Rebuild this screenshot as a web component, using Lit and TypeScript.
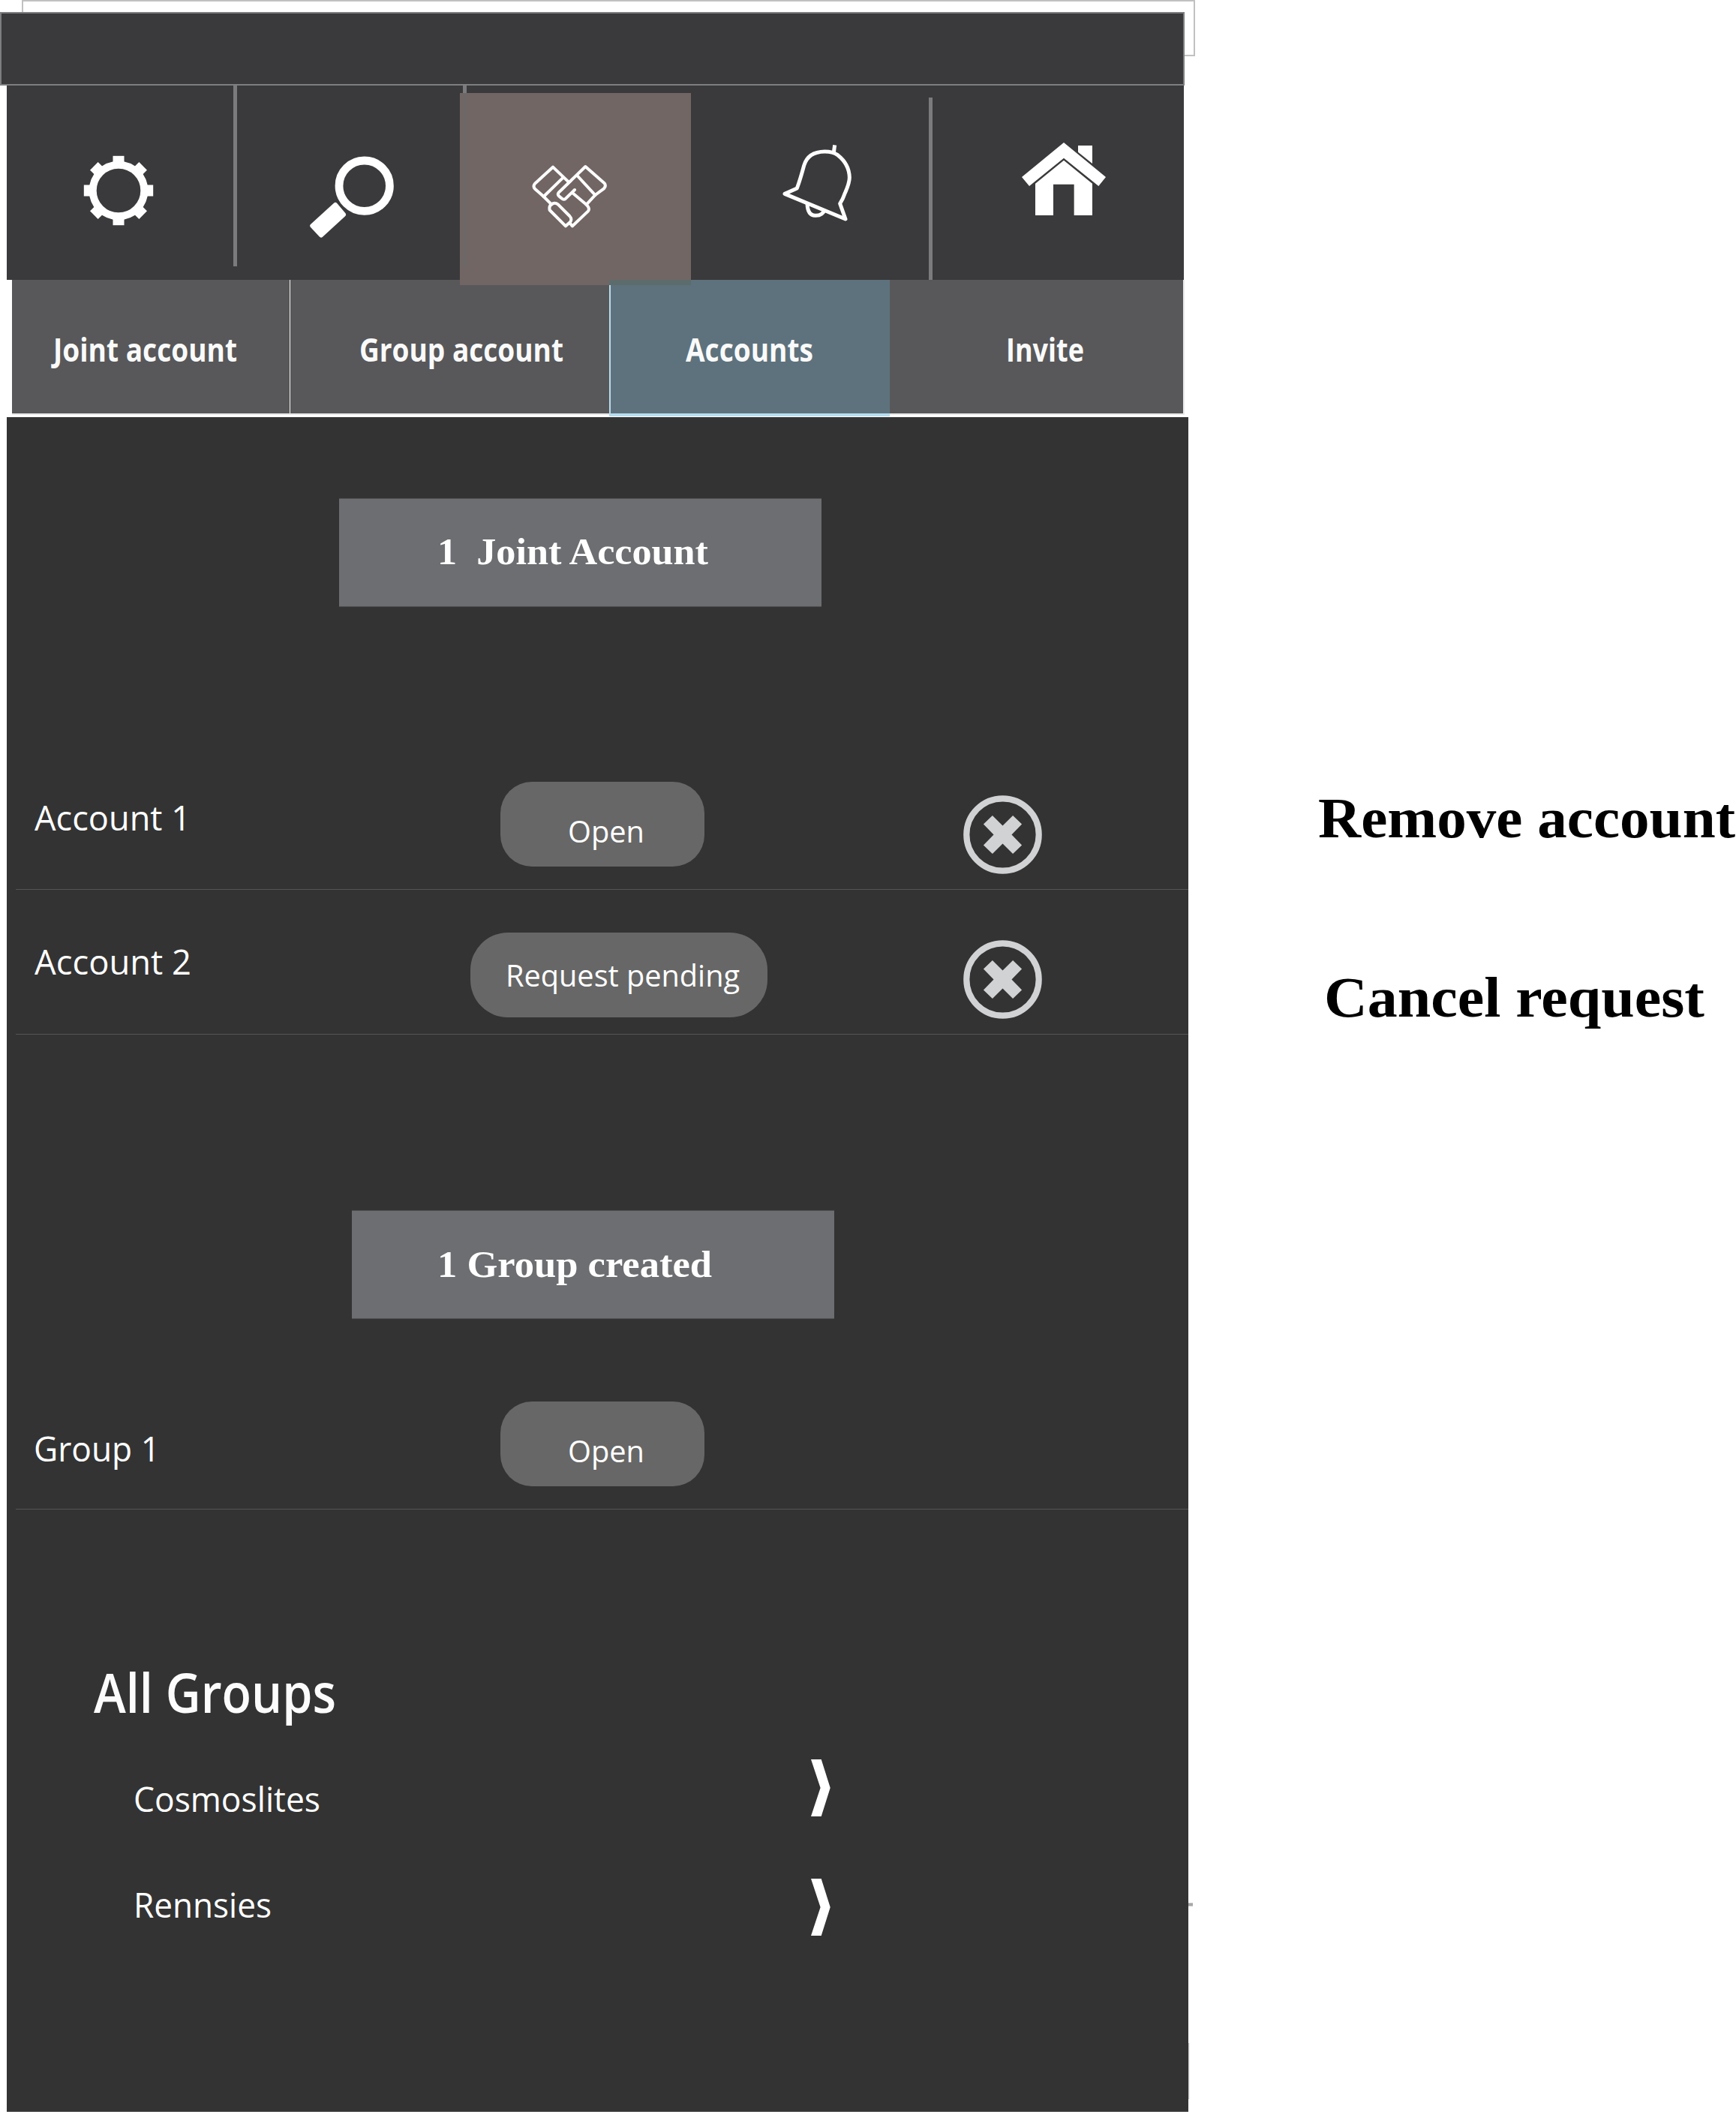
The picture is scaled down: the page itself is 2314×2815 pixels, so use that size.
import { LitElement, html, css, svg } from "lit";
import { customElement, property, state } from "lit/decorators.js";
import { classMap } from "lit/directives/class-map.js";

/** A single line of text condensed or widened to an exact advance width. */
@customElement("fit-text")
class FitText extends LitElement {
  @property() text = "";
  @property({ type: Number }) width = 100;
  @state() private scale = 1;

  static styles = css`
    :host {
      display: block;
      flex: none;
      line-height: 1;
      white-space: pre;
    }
    .box {
      display: block;
      height: 1em;
    }
    .line {
      display: inline-block;
      transform-origin: 0 0;
    }
  `;

  firstUpdated() {
    const line = this.renderRoot.querySelector(".line") as HTMLElement;
    const natural = line.getBoundingClientRect().width;
    if (natural > 0) this.scale = this.width / natural;
  }

  render() {
    return html`<span class="box" style="width:${this.width}px"
      ><span class="line" style="transform:scaleX(${this.scale})">${this.text}</span></span
    >`;
  }
}

const tooth = "M-7.5 -46.2h15v10h-15z";
const gearIcon = svg`<svg class="icon gear" viewBox="-47 -47 94 94" width="94" height="94">
  <circle r="34.3" fill="none" stroke="#fff" stroke-width="10"/>
  ${[0, 45, 90, 135, 180, 225, 270, 315].map(
    (a) => svg`<path d=${tooth} fill="#fff" transform="rotate(${a})"/>`
  )}
</svg>`;

const searchIcon = svg`<svg class="icon search" viewBox="412 207 114 112" width="114" height="112">
  <circle cx="485.7" cy="247.7" r="33.7" fill="none" stroke="#fff" stroke-width="10.8"/>
  <path d="M447 273L458 286L428 313.5L416.3 301Z" fill="#fff" stroke="#fff" stroke-width="6" stroke-linejoin="round"/>
</svg>`;

const handshakeIcon = svg`<svg class="icon shake" viewBox="324 324 306 261" width="102" height="87">
  <g fill="none" stroke="#fff" stroke-width="12" stroke-linejoin="round" stroke-linecap="round">
    <path d="M474 398L411 338L339 404Q330 415 339 425L374 456L406 488"/>
    <path d="M452 380L374 456"/>
    <path d="M545 488L580 450L615 424Q625 413 617 403L541 336L434 440Q428 448 436 455L446 463Q454 471 462 464L498 429"/>
    <path d="M508 372L580 450"/>
    <path d="M488 440L545 488Q560 504 552 514L489 574L478 561"/>
    <path d="M398 510Q394 490 410 484Q421 479 432 488L478 534Q489 546 480 558L462 574Z"/>
  </g>
</svg>`;

const bellIcon = svg`<svg class="icon bell" viewBox="66 66 285 315" width="95" height="105">
  <g fill="none" stroke="#fff" stroke-width="15" stroke-linejoin="round" stroke-linecap="butt">
    <path d="M78 265L127 243Q141 205 155 152Q171 97 238 96Q270 96 290 110Q336 146 337 200Q337 222 319 262Q311 286 299 304L321 366Z"/>
    <path d="M278 70L274 100"/>
    <path d="M168 300Q168 351 200 352Q230 353 238 328"/>
  </g>
</svg>`;

const houseIcon = svg`<svg class="icon house" viewBox="1026 60 336 291" width="112" height="97">
  <g fill="#fff">
    <path d="M1194 60L1362 198L1333 234L1194 122L1056 234L1026 198Z"/>
    <path d="M1251 72H1308V144L1251 98Z"/>
    <path d="M1194 131L1308 224V351H1235V227H1152V351H1080V224Z"/>
  </g>
</svg>`;

const removeIcon = html`<svg class="remove" viewBox="-52.5 -52.5 105 105" width="105" height="105">
  <circle r="48.2" fill="none" stroke="#d1d2d4" stroke-width="8.2" />
  <path
    fill="#d1d2d4"
    d="M-13.6 -25.4L0 -12L13.6 -25.4L25.6 -14L12 0L25.6 14L13.6 25.4L0 12L-13.6 25.4L-25.6 14L-12 0L-25.6 -14Z"
  />
</svg>`;

const chevron = html`<svg class="chevron" viewBox="0 0 26 76" width="26" height="76">
  <path fill="#fff" d="M0 0H13.7L25.7 38L13.7 76H0L12.6 38Z" />
</svg>`;

interface Row {
  cls: string;
  label: string;
  labelWidth: number;
  action: string;
  actionWidth: number;
  removable: boolean;
}

const accounts: Row[] = [
  { cls: "first", label: "Account 1", labelWidth: 208, action: "Open", actionWidth: 102, removable: true },
  { cls: "pending", label: "Account 2", labelWidth: 209, action: "Request pending", actionWidth: 312, removable: true },
];
const groups: Row[] = [
  { cls: "group", label: "Group 1", labelWidth: 168, action: "Open", actionWidth: 102, removable: false },
];

@customElement("app-root")
class AppRoot extends LitElement {
  static styles = css`
    :host {
      display: block;
      font-family: "Open Sans", "Noto Sans", sans-serif;
      color: #fff;
    }
    * {
      box-sizing: border-box;
    }
    svg {
      display: block;
      flex: none;
    }
    .page {
      position: relative;
      display: grid;
      grid-template-columns: 1584px 1fr;
      width: 2314px;
      height: 2815px;
      overflow: hidden;
      background: #fff;
    }
    .frame {
      position: absolute;
      left: 29px;
      top: 0;
      width: 1564px;
      height: 75px;
      border: 2px solid #c1c1c1;
    }
    .phone {
      position: relative;
      display: flex;
      flex-direction: column;
      padding-top: 16px;
      height: 2815px;
    }
    .status {
      flex: none;
      width: 1579px;
      height: 98px;
      border: 2px solid #7d7e80;
      background: #3a3a3c;
    }
    .nav {
      flex: none;
      display: flex;
      align-items: flex-start;
      width: 1569px;
      height: 259px;
      margin-left: 9px;
      background: #3a3a3c;
    }
    .cell {
      flex: none;
      display: flex;
    }
    .cell.settings {
      width: 302px;
      padding: 93px 0 0 101.7px;
    }
    .cell.find {
      width: 297px;
      padding: 93px 0 0 96px;
    }
    .cell.joint {
      position: relative;
      z-index: 1;
      width: 308px;
      height: 256px;
      margin-top: 10px;
      padding: 94px 0 0 95px;
      background: #716663;
    }
    .cell.joint::before {
      content: "";
      position: absolute;
      left: 4px;
      top: 0;
      width: 5px;
      height: 233px;
      background: #6b6867;
    }
    .cell.joint::after {
      content: "";
      position: absolute;
      left: 199px;
      right: 0;
      bottom: 0;
      height: 7px;
      background: #5c6c6d;
    }
    .cell.alerts {
      width: 317px;
      padding: 78px 0 0 121px;
    }
    .cell.home {
      flex: 1;
      padding: 76px 0 0 119px;
    }
    .rule {
      flex: none;
      width: 5px;
      height: 241px;
      background: #7b7b7d;
    }
    .rule.stub {
      width: 5px;
      height: 10px;
      margin-right: -9px;
      margin-left: 4px;
    }
    .rule.low {
      height: 243px;
      margin-top: 16px;
    }
    .tabs {
      flex: none;
      display: flex;
      width: 1563px;
      height: 180px;
      margin: 0 0 3px 16px;
      border-right: 2px solid #e9e9ea;
      border-bottom: 2px solid #e9e9ea;
      background: #58585a;
      font-size: 43px;
      font-weight: 700;
      color: #fafafa;
    }
    .tab {
      flex: none;
      height: 178px;
      padding-top: 71px;
    }
    .tab.a {
      width: 371px;
      padding-left: 55px;
      border-right: 1.5px solid #f4f4f4;
    }
    .tab.b {
      width: 425px;
      padding-left: 92px;
    }
    .tab.c {
      width: 374px;
      height: 182px;
      padding-left: 100px;
      border-left: 2px solid #b9dbe8;
      border-bottom: 4px solid #b7deef;
      background: #5e727d;
    }
    .tab.d {
      padding-left: 155px;
    }
    .panel {
      flex: none;
      width: 1575px;
      height: 2259px;
      margin-left: 9px;
      padding-left: 1px;
      display: flex;
      flex-direction: column;
      background: #333;
      border-bottom: 1px solid #666;
    }
    .badge {
      flex: none;
      width: 643px;
      height: 145px;
      background: #6d6e71;
      border-top: 1px solid #505052;
      border-bottom: 1px solid #505052;
      font: bold 51px "Liberation Serif", serif;
    }
    .badge.joint {
      margin: 108px 0 184px 441.5px;
      padding: 44.5px 0 0 131.5px;
    }
    .badge.created {
      margin: 234px 0 61px 459px;
      padding: 46px 0 0 114px;
    }
    .row {
      flex: none;
      display: grid;
      grid-template-columns: 606px 657px 1fr;
      align-items: start;
      height: 193px;
      margin-left: 11px;
      border-bottom: 1px solid #555;
    }
    .label {
      padding-left: 25px;
      font-size: 46px;
    }
    .first .label {
      padding-top: 73px;
    }
    .pending .label {
      padding-top: 72px;
    }
    .group .label {
      padding-top: 88px;
      padding-left: 24px;
    }
    .pill {
      width: 271.5px;
      height: 113px;
      margin: 48.5px 0 0 40px;
      padding: 46px 0 0 90px;
      border-radius: 42px;
      background: #676767;
      font-size: 40px;
    }
    .group .pill {
      margin-top: 48.5px;
      padding-top: 46px;
    }
    .pending .pill {
      width: 396px;
      margin: 57px 0 0;
      padding: 37px 0 0 47px;
      border-radius: 50px;
    }
    .remove {
      margin-top: 67px;
    }
    .all {
      margin: 206px 0 53px 115px;
      font-size: 73px;
      font-weight: 600;
      color: #fcfcfc;
      height: 74px;
    }
    .item {
      flex: none;
      display: grid;
      grid-template-columns: 904px 26px;
      height: 159px;
      margin-left: 167px;
      font-size: 46px;
      align-items: start;
    }
    .item .name {
      padding: 28.5px 0 0 1px;
    }
    .item.second .name {
      padding-top: 11px;
    }
    .tick {
      position: absolute;
      left: 1584px;
      top: 2536px;
      width: 6px;
      height: 5px;
      background: #a7a7a7;
      border-top: 1px solid #c8c8c8;
      border-bottom: 1px solid #c8c8c8;
    }
    .edge {
      position: absolute;
      left: 1584px;
      top: 2723px;
      width: 2px;
      height: 75px;
      background: #ccc;
      border-right: 1px solid #eee;
    }
    .notes {
      padding: 1051.5px 0 0 173px;
      font: bold 77px "Liberation Serif", serif;
      color: #000;
    }
    .notes .cancel {
      margin: 162px 0 0 8px;
    }
  `;

  private row(r: Row) {
    return html`<div class=${classMap({ row: true, [r.cls]: true })}>
      <div class="label"><fit-text .text=${r.label} .width=${r.labelWidth}></fit-text></div>
      <div class="pill"><fit-text .text=${r.action} .width=${r.actionWidth}></fit-text></div>
      ${r.removable ? removeIcon : ""}
    </div>`;
  }

  render() {
    return html`<div class="page">
      <div class="frame"></div>
      <main class="phone">
        <div class="status"></div>
        <nav class="nav">
          <div class="cell settings">${gearIcon}</div>
          <div class="rule"></div>
          <div class="cell find">${searchIcon}</div>
          <div class="rule stub"></div>
          <div class="cell joint">${handshakeIcon}</div>
          <div class="cell alerts">${bellIcon}</div>
          <div class="rule low"></div>
          <div class="cell home">${houseIcon}</div>
        </nav>
        <div class="tabs">
          <div class="tab a"><fit-text .text=${"Joint account"} .width=${245}></fit-text></div>
          <div class="tab b"><fit-text .text=${"Group account"} .width=${272}></fit-text></div>
          <div class="tab c"><fit-text .text=${"Accounts"} .width=${170}></fit-text></div>
          <div class="tab d"><fit-text .text=${"Invite"} .width=${104}></fit-text></div>
        </div>
        <section class="panel">
          <div class="badge joint"><fit-text .text=${"1  Joint Account"} .width=${361}></fit-text></div>
          ${accounts.map((r) => this.row(r))}
          <div class="badge created"><fit-text .text=${"1 Group created"} .width=${366}></fit-text></div>
          ${groups.map((r) => this.row(r))}
          <div class="all"><fit-text .text=${"All Groups"} .width=${323}></fit-text></div>
          <div class="item">
            <div class="name"><fit-text .text=${"Cosmoslites"} .width=${249}></fit-text></div>
            ${chevron}
          </div>
          <div class="item second">
            <div class="name"><fit-text .text=${"Rennsies"} .width=${184}></fit-text></div>
            ${chevron}
          </div>
        </section>
        <div class="tick"></div>
        <div class="edge"></div>
      </main>
      <aside class="notes">
        <fit-text .text=${"Remove account"} .width=${556}></fit-text>
        <fit-text class="cancel" .text=${"Cancel request"} .width=${507}></fit-text>
      </aside>
    </div>`;
  }
}
